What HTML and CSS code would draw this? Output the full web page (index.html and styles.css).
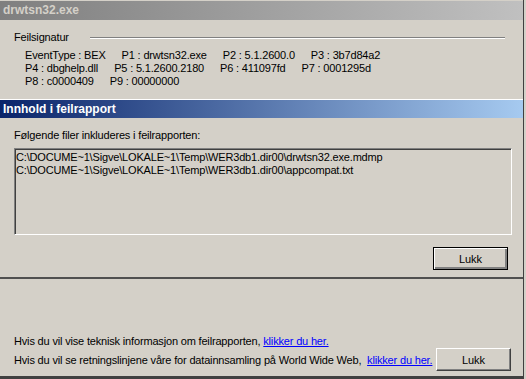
FILE: index.html
```html
<!DOCTYPE html>
<html lang="no">
<head>
    <meta charset="UTF-8">
    <title>drwtsn32.exe</title>
    <link rel="stylesheet" href="styles.css">
</head>
<body>

<div class="window">
    <div class="titlebar">drwtsn32.exe</div>

    <div class="signature">
        <div class="group-head">
            <span>Feilsignatur</span>
            <span class="etched"></span>
        </div>
        <div class="sig-rows">
            <div class="sig-row"><span>EventType : BEX</span><span>P1 : drwtsn32.exe</span><span>P2 : 5.1.2600.0</span><span>P3 : 3b7d84a2</span></div>
            <div class="sig-row"><span>P4 : dbghelp.dll</span><span>P5 : 5.1.2600.2180</span><span>P6 : 411097fd</span><span>P7 : 0001295d</span></div>
            <div class="sig-row"><span>P8 : c0000409</span><span>P9 : 00000000</span></div>
        </div>
    </div>

    <div class="section-bar">Innhold i feilrapport</div>

    <div class="content">
        <div class="label">Følgende filer inkluderes i feilrapporten:</div>
        <div class="listbox">
            <div>C:\DOCUME~1\Sigve\LOKALE~1\Temp\WER3db1.dir00\drwtsn32.exe.mdmp</div>
            <div>C:\DOCUME~1\Sigve\LOKALE~1\Temp\WER3db1.dir00\appcompat.txt</div>
        </div>
        <div class="actions">
            <button class="btn btn-default">Lukk</button>
        </div>
    </div>

    <div class="footer">
        <div class="footer-line">Hvis du vil vise teknisk informasjon om feilrapporten, <a href="#">klikker du her.</a></div>
        <div class="footer-row">
            <span>Hvis du vil se retningslinjene våre for datainnsamling på World Wide Web,&nbsp; <a href="#">klikker du her.</a></span>
            <button class="btn">Lukk</button>
        </div>
    </div>
</div>

</body>
</html>
```

FILE: styles.css
```css
/* Windows classic dialog */
body {
    margin: 0;
    padding: 0;
    background-color: #d4d0c8;
    font-family: "Liberation Sans", Arial, sans-serif;
    font-size: 11px;
    letter-spacing: -0.17px;
    color: #000;
    width: 526px;
    height: 379px;
    overflow: hidden;
}
.window {
    width: 524px;
    height: 379px;
    box-sizing: border-box;
    border-right: 1px solid #404040;
    border-bottom: 3px solid #404040;
    display: flex;
    flex-direction: column;
}
.titlebar {
    margin-top: 1px;
    height: 19px;
    line-height: 19px;
    padding-left: 3px;
    font-weight: bold;
    font-size: 12px;
    letter-spacing: 0;
    color: #d4d0c8;
    background: linear-gradient(to right, #7f7f7f, #c0c0c0);
}
.signature {
    padding: 11px 0 11px 14px;
    border-bottom: 1px solid #fff;
}
.group-head {
    display: flex;
    align-items: center;
    line-height: 13px;
}
.etched {
    flex: 1;
    margin: 1px 18px 0 21px;
    border-top: 1px solid #808080;
    border-bottom: 1px solid #fff;
}
.sig-rows {
    margin-top: 5px;
    padding-left: 11px;
}
.sig-row {
    line-height: 13px;
    white-space: nowrap;
}
.sig-row span {
    margin-right: 16px;
}
.section-bar {
    height: 18px;
    line-height: 18px;
    padding-left: 3px;
    font-weight: bold;
    font-size: 12px;
    letter-spacing: 0;
    color: #fff;
    background: linear-gradient(to right, #0a246a, #a6caf0);
}
.content {
    padding: 11px 15px 7px 14px;
    border-bottom: 2px solid #505050;
}
.label {
    line-height: 13px;
}
.listbox {
    margin-top: 6px;
    margin-right: -4px;
    height: 87px;
    box-sizing: border-box;
    padding: 2px 1px;
    border: 1px solid;
    border-color: #808080 #fff #fff #808080;
    box-shadow: inset 1px 1px #404040;
    line-height: 13px;
    white-space: nowrap;
    overflow: hidden;
}
.actions {
    margin-top: 12px;
    display: flex;
    justify-content: flex-end;
}
.btn {
    width: 75px;
    height: 23px;
    padding: 0;
    font-family: inherit;
    font-size: 11px;
    color: #000;
    background-color: #d4d0c8;
    border: 1px solid;
    border-color: #fff #404040 #404040 #fff;
    box-shadow: inset -1px -1px #808080;
}
.btn-default {
    border: 1px solid #000;
    box-shadow: inset 1px 1px #fff, inset -2px -2px #808080, inset -1px -1px #404040;
}
.footer {
    flex: 1;
    display: flex;
    flex-direction: column;
    justify-content: flex-end;
    padding: 0 12px 5px 14px;
}
.footer-line {
    line-height: 13px;
}
.footer-row {
    display: flex;
    justify-content: space-between;
    align-items: center;
    white-space: nowrap;
}
.footer a {
    color: #0000ff;
}
```
